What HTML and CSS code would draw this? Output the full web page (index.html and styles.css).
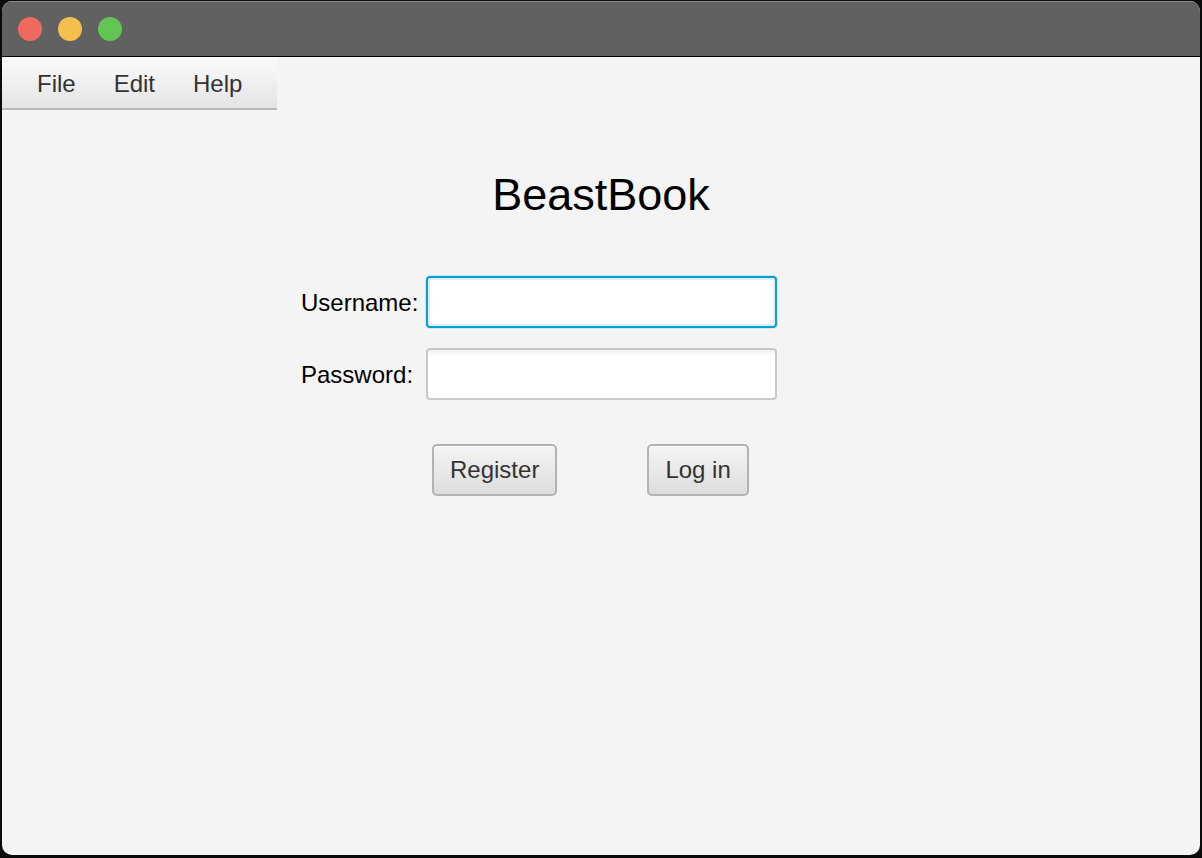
FILE: index.html
```html
<!DOCTYPE html>
<html lang="en">
<head>
<meta charset="utf-8">
<title>BeastBook</title>
<link rel="stylesheet" href="styles.css">
</head>
<body>
<div class="window">
  <div class="titlebar">
    <span class="light light-red"></span>
    <span class="light light-yellow"></span>
    <span class="light light-green"></span>
  </div>
  <div class="content">
    <nav class="menubar">
      <span class="menu-item">File</span>
      <span class="menu-item">Edit</span>
      <span class="menu-item">Help</span>
    </nav>
    <main class="login">
      <h1 class="title">BeastBook</h1>
      <div class="form">
        <label class="field-label" for="user">Username:</label>
        <input class="field field-focus" id="user" type="text">
        <label class="field-label" for="pass">Password:</label>
        <input class="field" id="pass" type="password">
      </div>
      <div class="actions">
        <button class="btn" type="button">Register</button>
        <button class="btn" type="button">Log in</button>
      </div>
    </main>
  </div>
</div>
</body>
</html>
```
FILE: styles.css
```css
html, body {
  margin: 0;
  padding: 0;
  background: #0b0b0b;
  height: 100%;
}
body {
  font-family: "Liberation Sans", Arial, sans-serif;
  overflow: hidden;
}
.window {
  margin: 1px 2px 0 2px;
  height: 854px;
  border-radius: 10px;
  overflow: hidden;
  display: flex;
  flex-direction: column;
  background: #f4f4f4;
}
.titlebar {
  height: 54px;
  background: #616161;
  border-top: 1px solid #8d8d8d;
  border-bottom: 1px solid #000;
  display: flex;
  align-items: center;
  padding-left: 16px;
  gap: 16px;
  flex: none;
}
.light {
  width: 24px;
  height: 24px;
  border-radius: 50%;
  display: block;
}
.light-red { background: #ee6a5f; }
.light-yellow { background: #f5be4f; }
.light-green { background: #62c554; }
.content {
  flex: 1;
  display: flex;
  flex-direction: column;
}
.menubar {
  width: 259px;
  height: 51px;
  padding-left: 16px;
  padding-top: 2px;
  box-sizing: content-box;
  display: flex;
  align-items: center;
  background: linear-gradient(#fbfbfb, #e4e4e4);
  border-bottom: 2px solid #b9b9b9;
}
.menubar {
  height: 49px;
}
.menu-item {
  padding: 0 19px;
  font-size: 24px;
  color: #333;
}
.login {
  display: flex;
  flex-direction: column;
  align-items: flex-start;
}
.title {
  align-self: stretch;
  margin: 59px 0 0 0;
  text-align: center;
  font-size: 45px;
  line-height: 52px;
  font-weight: normal;
  color: #000;
}
.form {
  margin: 55px 0 0 299px;
  display: grid;
  grid-template-columns: auto 351px;
  justify-content: start;
  column-gap: 8px;
  row-gap: 20px;
  align-items: center;
}
.field-label {
  font-size: 24px;
  color: #000;
  padding-top: 2px;
}
.field {
  box-sizing: border-box;
  height: 52px;
  width: 351px;
  margin: 0;
  border: 2px solid #c8c8c8;
  border-radius: 4px;
  background: linear-gradient(#f0f0f0, #ffffff 6px);
  font-size: 20px;
  outline: none;
}
.field-focus {
  border: 2px solid #0a9ed6;
  background: #fff;
  box-shadow: 0 0 0 1px rgba(3, 158, 211, 0.15), inset 0 0 0 2px #dcf0f9;
}
.actions {
  margin: 44px 0 0 430px;
  display: flex;
  gap: 90px;
}
.btn {
  box-sizing: border-box;
  height: 52px;
  padding: 0 16px;
  border: 2px solid #b3b3b3;
  border-radius: 5px;
  background: linear-gradient(#f4f4f4, #dddddd);
  box-shadow: inset 0 1px 0 #fff;
  font-family: "Liberation Sans", Arial, sans-serif;
  font-size: 24px;
  color: #333;
}
```
